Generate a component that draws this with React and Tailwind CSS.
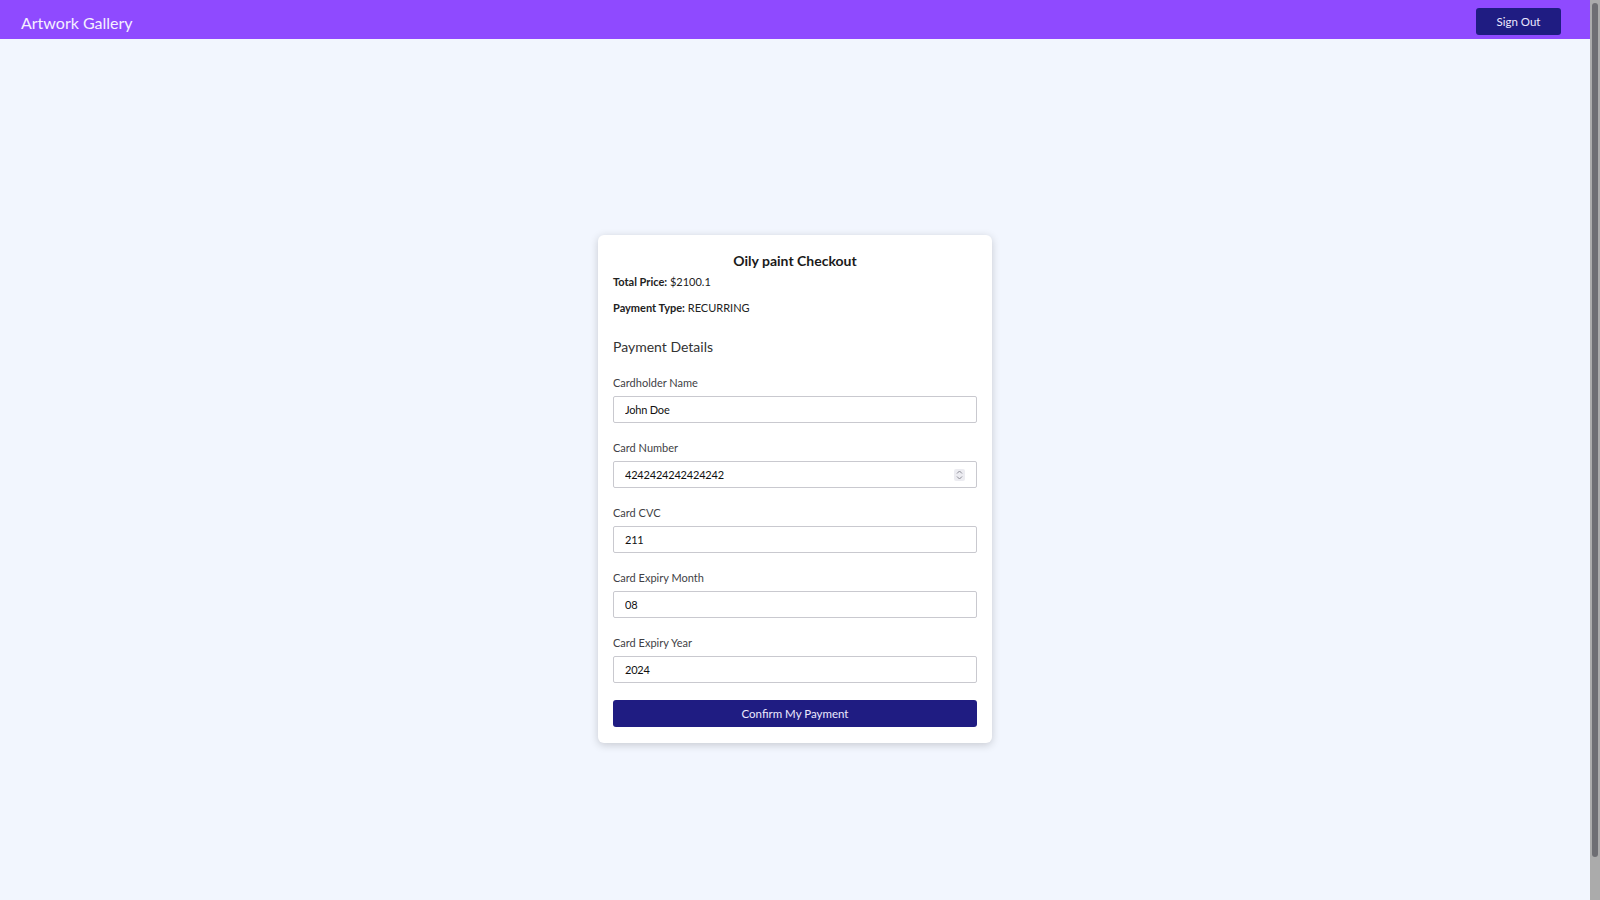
import { useState } from "react";

const FONT = { fontFamily: "Lato, 'Noto Sans', 'Liberation Sans', sans-serif" };

// one label + input pair of the payment form
function Field({ label, value, onChange, spinner }) {
  return (
    <label className="flex flex-col gap-[5px]">
      <span className="text-[11px] leading-4 text-[#3f3f46]">{label}</span>
      <div className="relative">
        <input
          type="text"
          value={value}
          onChange={(e) => onChange(e.target.value)}
          className="h-[27px] w-full rounded-[2px] border border-[#c9c9cf] bg-white px-[11px] text-[11px] tracking-[-0.2px] text-[#111] focus:outline-none"
        />
        {spinner && (
          <span className="pointer-events-none absolute right-[12px] top-[8px] flex h-[12px] w-[11px] items-center justify-center rounded-[2px] bg-[#ececf1]">
            <svg width="7" height="10" viewBox="0 0 7 10" fill="none" stroke="#8b8b95" strokeWidth="1">
              <path d="M1 3.5 L3.5 1 L6 3.5" />
              <path d="M1 6.5 L3.5 9 L6 6.5" />
            </svg>
          </span>
        )}
      </div>
    </label>
  );
}

export default function App() {
  const [form, setForm] = useState({
    name: "John Doe",
    number: "4242424242424242",
    cvc: "211",
    month: "08",
    year: "2024",
  });
  const set = (k) => (v) => setForm((f) => ({ ...f, [k]: v }));

  return (
    <div className="w-[calc(100%-10px)] bg-[#f2f6fe]" style={FONT}>
      <header className="flex h-[39px] items-start justify-between bg-[#8f4aff] pl-[21px] pr-[29px] pt-[8px]">
        <span className="pt-[5px] text-[16px] leading-5 text-[#f5f0ff]">Artwork Gallery</span>
        <button className="h-[27px] w-[85px] rounded-[3px] bg-[#1f1c82] text-[11.5px] text-[#ece9ff]">
          Sign Out
        </button>
      </header>

      <main className="flex h-[900px] items-center justify-center">
        <div className="w-[394px] rounded-[6px] bg-white px-[15px] pb-[16px] pt-[16px] shadow-[0_2px_8px_rgba(0,0,0,0.18)]">
          <h1 className="text-center text-[14px] font-bold leading-5 text-[#1a1a1a]">Oily paint Checkout</h1>
          <p className="mt-[3px] text-[11px] leading-4 text-[#222]">
            <b>Total Price:</b> $2100.1
          </p>
          <p className="mt-[10px] text-[11px] leading-4 text-[#222]">
            <b>Payment Type:</b> RECURRING
          </p>
          <h2 className="mt-[21px] text-[14px] leading-5 text-[#333]">Payment Details</h2>

          <form className="mt-[18px] flex flex-col" onSubmit={(e) => e.preventDefault()}>
            <div className="flex flex-col gap-[17px]">
              <Field label="Cardholder Name" value={form.name} onChange={set("name")} />
              <Field label="Card Number" value={form.number} onChange={set("number")} spinner />
              <Field label="Card CVC" value={form.cvc} onChange={set("cvc")} />
              <Field label="Card Expiry Month" value={form.month} onChange={set("month")} />
              <Field label="Card Expiry Year" value={form.year} onChange={set("year")} />
            </div>
            <button type="submit" className="mt-[17px] h-[27px] w-full rounded-[3px] bg-[#1f1c82] text-[11.5px] text-[#ece9ff]">
              Confirm My Payment
            </button>
          </form>
        </div>
      </main>

      {/* browser scrollbar as seen in the screenshot */}
      <div className="fixed right-0 top-0 h-screen w-[10px] bg-[#ababab] px-[2px] pt-[3px]">
        <div className="h-[854px] w-full rounded-full bg-[#6e6e73]" />
      </div>
    </div>
  );
}
